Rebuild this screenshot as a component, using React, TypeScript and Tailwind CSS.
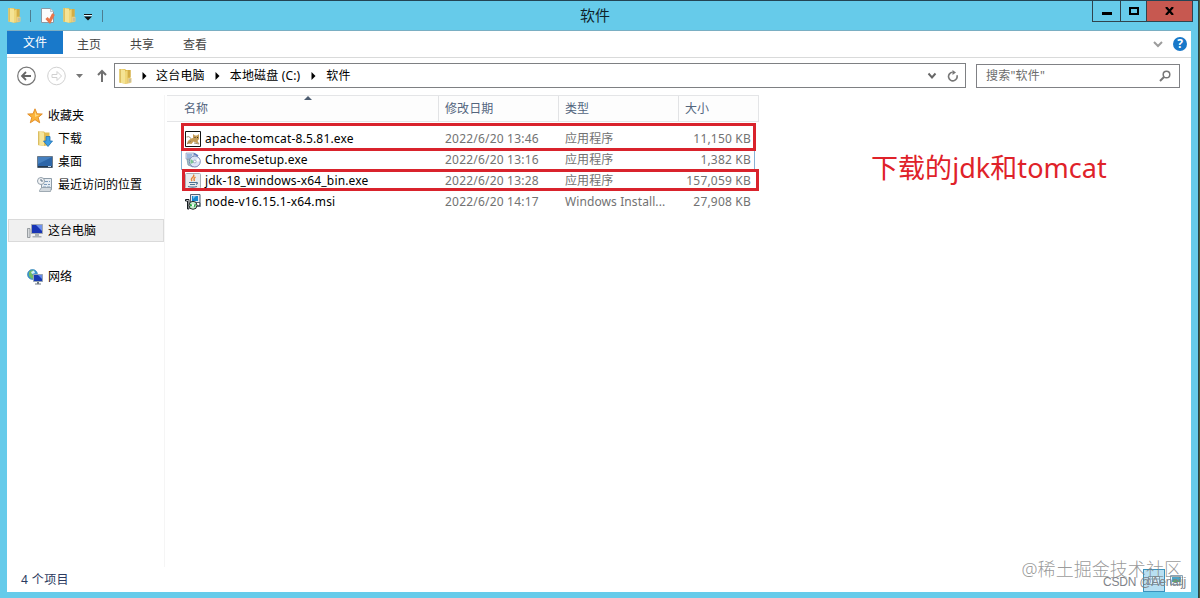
import type { ReactNode } from "react";

interface FileEntry {
  name: string;
  date: string;
  type: string;
  size: string;
  icon: ReactNode;
}

const FolderIcon = () => (
  <svg width="16" height="16" viewBox="0 0 16 16" className="shrink-0">
    <path d="M1.500 1h5.500l1 1h4.500v13l-5 .8-6-1.300z" fill="#dcb94e" />
    <path d="M1.500 1l5.500.8v14L1.500 14.500z" fill="#f4e394" />
    <path d="M1.500 1H3v13.800l-1.500-.3z" fill="#dcbf62" />
    <path d="M7 3.500l2.500-1V15L7 15.800z" fill="#efd678" />
    <path d="M10 2h2.500v7H10z" fill="#d3ad45" />
    <path d="M9.500 10h4v4.500l-4 .8z" fill="#e6cc85" />
    <path d="M11 11h2v3h-2z" fill="#c8bf9a" />
  </svg>
);

const PropertiesIcon = () => (
  <svg width="16" height="17" viewBox="0 0 16 17" className="shrink-0">
    <path d="M1.500 1.500h9l3 3v11h-12z" fill="#fcfcfc" stroke="#8b98a3" />
    <path d="M10.500 1.500v3h3" fill="#e4e8ec" stroke="#a4adb5" strokeWidth=".7" />
    <path d="M6.500 11l3.200 3.500 3.800-7.500" fill="none" stroke="#e8764a" strokeWidth="3" />
  </svg>
);

const StarIcon = () => (
  <svg width="16" height="16" viewBox="0 0 16 16" className="shrink-0">
    <path d="M8 .8l2 5 5.300.200-4.100 3.400 1.500 5.400L8 11.700l-4.700 3.100 1.500-5.400L.7 6l5.300-.2z" fill="#fbb33a" stroke="#e08a24" strokeWidth=".9" />
    <path d="M8 3l1.200 3.800 3.300.200L8 9z" fill="#ffd982" />
  </svg>
);

const DownloadsIcon = () => (
  <svg width="16" height="16" viewBox="0 0 16 16" className="shrink-0">
    <path d="M1 .5h6l1 1h4.500V14L7 15l-6-1z" fill="#e0bd55" />
    <path d="M1 .5l6 1V15l-6-1z" fill="#f6e69c" />
    <path d="M1 .5h1.300v13.700L1 14z" fill="#dbbd62" />
    <path d="M9 5.500h4V10h2.500L11 15.500 6.500 10H9z" fill="#3d9ee2" stroke="#2272b5" strokeWidth=".8" />
  </svg>
);

const DesktopIcon = () => (
  <svg width="16" height="16" viewBox="0 0 16 16" className="shrink-0">
    <path d="M.5 2.500h15v11H.5z" fill="#2d66a8" stroke="#6a7a8a" />
    <path d="M1 3h14L1 10z" fill="#4580c0" />
    <path d="M1 12h14v1.500H1z" fill="#25384c" />
    <path d="M11 12.500h3" stroke="#bcd4e8" />
  </svg>
);

const RecentIcon = () => (
  <svg width="16" height="16" viewBox="0 0 16 16" className="shrink-0">
    <path d="M4.500 1.500h10v11h-10z" fill="#e7edf2" stroke="#8e9ca8" />
    <path d="M8 4.500h5M7 7.500h6M6 10h7" stroke="#7f9cbb" strokeDasharray="3 1" />
    <path d="M2.500 13.500l2-3h10l-1 4h-11z" fill="#d3d9de" stroke="#8c99a3" strokeWidth=".8" />
    <circle cx="4" cy="4" r="3.500" fill="#f2f4f6" stroke="#93a0ab" />
    <path d="M4 2v2h2" fill="none" stroke="#5f7386" />
  </svg>
);

const ComputerIcon = () => (
  <svg width="16" height="16" viewBox="0 0 16 16" className="shrink-0">
    <path d="M.5 5.500h2.500v9H.5z" fill="#d6d9dc" stroke="#858b91" strokeWidth=".8" />
    <path d="M4.500 1.500h11v9h-11z" fill="#1935b5" stroke="#a2a9b0" />
    <path d="M9 2h6v6z" fill="#6f91ed" />
    <path d="M8 11h4v2h2.500v1.500H5.500V13H8z" fill="#aab1b8" />
  </svg>
);

const NetworkIcon = () => (
  <svg width="16" height="16" viewBox="0 0 16 16" className="shrink-0">
    <circle cx="5.500" cy="5.500" r="5" fill="#3b97cf" stroke="#287db0" strokeWidth=".6" />
    <path d="M2 3q3-3 5-1L5 5l2 3-2 2-3-3z" fill="#73bd62" />
    <path d="M4 3l3-1.500L8 4 5 5z" fill="#d4eefa" />
    <path d="M6.500 5.500h9v7h-9z" fill="#173bb3" stroke="#98a5b4" />
    <path d="M11 6h4v4z" fill="#668be8" />
    <path d="M10 13h2v1.500h2v1H8v-1h2z" fill="#6e7983" />
  </svg>
);

const TomcatIcon = () => (
  <svg width="16" height="16" viewBox="0 0 16 16" className="shrink-0">
    <path d="M.5.500h15v15H.5z" fill="#fff" stroke="#111" />
    <path d="M2 12.500q1-3.500 4-5l2-.5V3l2 1.500h2L14 3v5l-1.500 2 2 3-4-1.500-2-1-2 2.500z" fill="#c59d58" />
    <path d="M1.500 6q2.500-1.500 4.500 1.500M2 13l4-3M9 12l5 1" fill="none" stroke="#857653" strokeWidth=".8" />
    <path d="M9.500 6.500h1M12 6.500h1" stroke="#44351e" />
  </svg>
);

const SetupIcon = () => (
  <svg width="16" height="16" viewBox="0 0 16 16" className="shrink-0">
    <path d="M1 1h8v6H1z" fill="#d8e1ef" stroke="#8d98bd" strokeWidth=".7" />
    <path d="M2 3h5M2 5h4" stroke="#5f8fcc" />
    <path d="M2 7h6v8l-5-2z" fill="#9fc7c4" stroke="#7288a5" strokeWidth=".7" />
    <circle cx="9.800" cy="9.500" r="5.500" fill="#dce5f6" stroke="#6f7dae" strokeWidth=".9" />
    <path d="M10 10L5.500 7v5z" fill="#7ac58f" />
    <path d="M10 10l3-4 2 3z" fill="#fff" />
    <circle cx="9.800" cy="9.500" r="1.400" fill="#fff" stroke="#7885b4" strokeWidth=".6" />
    <path d="M9 1.500l4 2.500" stroke="#5d79bd" strokeWidth="1.600" />
  </svg>
);

const JavaIcon = () => (
  <svg width="16" height="16" viewBox="0 0 16 16" className="shrink-0">
    <rect x=".5" y=".5" width="15" height="15" rx="1" fill="#e9ecee" stroke="#a9b0b6" />
    <path d="M8.500 1.500q1 1.500-1 3t-.5 3.500M10.500 4Q8 5.500 9.500 8" fill="none" stroke="#e58335" strokeWidth="1.300" />
    <path d="M4 9.500h7M5 11.500h5M3 13.500q5 1.200 9 0M11 9.300q3 .5 0 2.200" fill="none" stroke="#4c7292" strokeWidth="1.100" />
  </svg>
);

const InstallerIcon = () => (
  <svg width="16" height="16" viewBox="0 0 16 16" className="shrink-0">
    <path d="M5.500.500h9.500v8H5.500z" fill="#e7edf4" stroke="#566171" />
    <path d="M7 2h6v5H7z" fill="#1688cf" />
    <path d="M8 2h3L8 5z" fill="#7ac6ef" />
    <path d="M15 8.500v3.500h-3.500" fill="none" stroke="#34434c" strokeWidth="1.300" />
    <path d="M.5 5.500h3.500v9.500H2.500V7H.5z" fill="#fff" stroke="#151b20" />
    <circle cx="8" cy="11.300" r="4" fill="#c5eccd" stroke="#252b2b" />
    <path d="M8 11.500l-3-2v3zM8 11.500l3-2-1 4z" fill="#2eaa4c" />
    <circle cx="8" cy="11.300" r="1.100" fill="#fff" />
  </svg>
);

const files: FileEntry[] = [
  { name: "apache-tomcat-8.5.81.exe", date: "2022/6/20 13:46", type: "应用程序", size: "11,150 KB", icon: <TomcatIcon /> },
  { name: "ChromeSetup.exe", date: "2022/6/20 13:16", type: "应用程序", size: "1,382 KB", icon: <SetupIcon /> },
  { name: "jdk-18_windows-x64_bin.exe", date: "2022/6/20 13:28", type: "应用程序", size: "157,059 KB", icon: <JavaIcon /> },
  { name: "node-v16.15.1-x64.msi", date: "2022/6/20 14:17", type: "Windows Install...", size: "27,908 KB", icon: <InstallerIcon /> },
];

const Crumb = () => (
  <svg width="5" height="8" viewBox="0 0 5 8" className="shrink-0">
    <path d="M.5 0l4 4-4 4z" fill="#000" />
  </svg>
);

const TitleBar = () => (
  <header className="flex h-[30px] shrink-0 border-t border-[#234454]">
    <div className="flex w-[552px] pl-[7px] pt-1.5">
      <FolderIcon />
      <div className="ml-[7px] mt-[3px] h-3 w-px bg-[#4d7d91]" />
      <div className="ml-[9px]"><PropertiesIcon /></div>
      <div className="ml-[6px]"><FolderIcon /></div>
      <svg width="8" height="7" viewBox="0 0 8 7" className="ml-[6px] mt-[7px]">
        <path d="M0 0h8v1H0zM0 2.500h8L4 6.500z" fill="#111" />
        <path d="M0 1h8v1H0z" fill="#e8f6fb" />
      </svg>
      <div className="ml-[10px] mt-[3px] h-3 w-px bg-[#4d7d91]" />
    </div>
    <div className="w-[86px] pt-[4px] text-center text-[15px] leading-5 text-[#10232b]">软件</div>
    <div className="ml-auto mr-[5px] flex h-[21px] border-x border-b border-[#30434d]">
      <button className="flex w-[27px] items-center justify-center">
        <span className="mt-[5px] h-[3px] w-2.5 bg-black" />
      </button>
      <button className="flex w-[26px] items-center justify-center border-l border-[#30434d]">
        <span className="h-2 w-2.5 border-2 border-black" />
      </button>
      <button className="flex w-[46px] items-center justify-center border-l border-[#30434d] bg-[#c75850]">
        <svg width="9" height="8" viewBox="0 0 9 8"><path d="M1 0l7 8M8 0L1 8" stroke="#000" strokeWidth="2.200" /></svg>
      </button>
    </div>
  </header>
);

const RibbonTabs = () => (
  <nav className="flex h-[28px] shrink-0 border-b border-t border-b-[#d9dada] border-t-[#7aafc3] text-[12px] leading-[28px] text-[#454545]">
    <div className="h-[23px] w-[56px] bg-[#1979ca] text-center leading-[23px] text-white">文件</div>
    <span className="ml-[14px]">主页</span>
    <span className="ml-[29px]">共享</span>
    <span className="ml-[29px]">查看</span>
    <svg width="10" height="8" viewBox="0 0 10 8" className="ml-auto mr-2.5 mt-2.5">
      <path d="M1 1l4 4 4-4" fill="none" stroke="#9c9c9c" strokeWidth="2" />
    </svg>
    <span className="mr-1 mt-[6px] h-3.5 w-3.5 rounded-full bg-[#1878c9] text-center text-[12px] font-bold leading-3.5 text-white">?</span>
  </nav>
);

const AddressBar = () => (
  <div className="flex h-[37px] shrink-0 items-center pb-[2px] pl-2.5 pr-[11px]">
    <svg width="90" height="20" viewBox="0 0 90 20" className="shrink-0" fill="none">
      <circle cx="9.500" cy="10" r="8.800" stroke="#777" strokeWidth="1.200" />
      <path d="M14 10H5.500M9 6l-4 4 4 4" stroke="#666" strokeWidth="1.800" />
      <circle cx="39.500" cy="10" r="8.800" stroke="#d1d1d1" />
      <path d="M35 8.500h5v-3l4.500 4.500-4.500 4.500v-3h-5z" stroke="#d1d1d1" />
      <path d="M59 8h7l-3.500 4z" fill="#777" />
      <path d="M85 16V5M81 9l4-4 4 4" stroke="#707070" strokeWidth="2" />
    </svg>
    <div className="ml-[7px] flex h-[25px] w-[852px] shrink-0 items-center border border-[#7e8083] pl-[3px] text-[12px] text-black">
      <FolderIcon />
      <span className="ml-2"><Crumb /></span>
      <span className="ml-[9px] tracking-[0.2px]">这台电脑</span>
      <span className="ml-[10px]"><Crumb /></span>
      <span className="ml-[10px] whitespace-nowrap tracking-[0.15px]">本地磁盘 (C:)</span>
      <span className="ml-[11px]"><Crumb /></span>
      <span className="ml-[10px] tracking-[0.2px]">软件</span>
      <svg width="10" height="8" viewBox="0 0 10 8" className="ml-auto mr-[10px]">
        <path d="M1.500 1.500L5 5.500l3.500-4" fill="none" stroke="#666" strokeWidth="1.900" />
      </svg>
      <svg width="12" height="12" viewBox="0 0 12 12" className="mr-[6px]">
        <path d="M9.900 5.200A4.300 4.300 0 1 1 5.600 2.300" fill="none" stroke="#777" strokeWidth="1.600" />
        <path d="M5.500 0v5L9 2.500z" fill="#777" />
      </svg>
    </div>
    <div className="ml-2.5 mt-px flex h-6 w-[204px] shrink-0 items-center border border-[#808185] pl-[9px] text-[12px] text-[#6d6d6d]">
      <span className="tracking-[0.2px]">搜索"软件"</span>
      <svg width="12" height="12" viewBox="0 0 12 12" className="ml-auto mr-[8px]">
        <circle cx="7.500" cy="4.500" r="3.300" fill="none" stroke="#777" strokeWidth="1.500" />
        <path d="M5 7L1 11" stroke="#777" strokeWidth="2" />
      </svg>
    </div>
  </div>
);

const Sidebar = () => (
  <aside className="w-[158px] shrink-0 border-r border-[#f5f5f5] pt-[9px] text-[12px] text-black">
    <div className="flex h-[23px] items-center gap-[5px] pl-5"><StarIcon />收藏夹</div>
    <div className="flex h-[23px] items-center gap-[5px] pl-[30px]"><DownloadsIcon />下载</div>
    <div className="flex h-[23px] items-center gap-[5px] pl-[30px]"><DesktopIcon />桌面</div>
    <div className="flex h-[23px] items-center gap-[5px] pl-[30px]"><RecentIcon />最近访问的位置</div>
    <div className="ml-px mt-[23px] flex h-[23px] w-[156px] items-center gap-[5px] border border-[#dadada] bg-[#f0f0f0] pl-[18px]"><ComputerIcon />这台电脑</div>
    <div className="mt-[23px] flex h-[23px] items-center gap-[5px] pl-5"><NetworkIcon />网络</div>
  </aside>
);

const FileList = () => (
  <main className="relative min-w-0 grow text-[12px]">
    <div className="ml-[2px] flex h-[27px] w-[592px] border border-l-0 border-[#e4e5e7] bg-[#fdfdfd] leading-[26px] text-[#53657d]">
      <span className="w-[272px] border-r border-[#e2e3e5] pl-[17px]">名称</span>
      <span className="w-[120px] border-r border-[#e2e3e5] pl-1.5 tracking-[0.1px]">修改日期</span>
      <span className="w-[120px] border-r border-[#e2e3e5] pl-1.5">类型</span>
      <span className="pl-1.5">大小</span>
    </div>
    <svg width="8" height="4" viewBox="0 0 8 4" className="absolute left-[139px] top-[1px]"><path d="M4 0l4 4H0z" fill="#4d5c70" /></svg>
    <div className="pl-[20px] pt-[6px]">
      {files.map((file) => (
        <div key={file.name} className="flex h-[21px] items-center whitespace-nowrap text-[#727272]">
          {file.icon}
          <span className="ml-1 w-[240px] tracking-[0.17px] text-black">{file.name}</span>
          <span className="w-[120px] tracking-[0.2px]">{file.date}</span>
          <span className="w-[104px] tracking-[0.1px]">{file.type}</span>
          <span className="w-[82px] text-right tracking-[0.2px]">{file.size}</span>
        </div>
      ))}
    </div>
    <div className="absolute left-[16px] top-[55px] h-[20px] w-[574px] border-x border-[#89b2d5]" />
    <div className="absolute left-[16px] top-[28px] h-[28px] w-[575px] border-3 border-[#d9232c]" />
    <div className="absolute left-[17px] top-[74px] h-[22px] w-[577px] border-3 border-[#d9232c]" />
    <div className="absolute left-[706px] top-[54px] whitespace-nowrap text-[27px] leading-[38px] tracking-[0.05px] text-[#df2229]">下载的jdk和tomcat</div>
  </main>
);

const StatusBar = () => (
  <footer className="relative flex h-[25px] shrink-0 pl-[14px] text-[12px] leading-[26px] tracking-[0.4px] text-[#2b3a60]">
    4 个项目
    <div className="absolute right-[26px] top-[2px] h-[23px] w-[22px] border border-[#3b92bc] bg-[#b8dff2]">
      <svg width="20" height="21" viewBox="0 0 20 21"><path d="M4.500 6.500h11v8h-11zM4.500 9h11M8.500 6.500v8" fill="#dceff8" stroke="#7f9fb2" /></svg>
    </div>
    <svg width="13" height="10" viewBox="0 0 13 10" className="absolute right-[8px] top-[8px]">
      <path d="M.5.500h12v9H.5z" fill="#eff9fd" stroke="#8aa3b3" />
      <path d="M2 2h9v5H2z" fill="#4ba3c6" />
      <path d="M2 7l4-3 5 3z" fill="#61a56b" />
    </svg>
    <div className="absolute right-[9px] top-[-10px] whitespace-nowrap text-[18px] font-light leading-6 tracking-[0.05px] text-[#808080]/80">@稀土掘金技术社区</div>
    <div className="absolute right-[5px] top-[7px] whitespace-nowrap font-['Liberation_Sans',sans-serif] text-[12px] leading-4 tracking-[-0.2px] text-[#7f8389]">CSDN @Aenaijj</div>
  </footer>
);

const App = () => {
  return (
    <div className="flex h-[598px] w-[1200px] overflow-hidden bg-[#66cbea] font-['Noto_Sans','Noto_Sans_CJK_SC',sans-serif]">
      <div className="flex w-[1198px] shrink-0 flex-col">
        <TitleBar />
        <section className="ml-[7px] flex h-[562px] w-[1184px] flex-col bg-white">
          <RibbonTabs />
          <AddressBar />
          <div className="flex min-h-0 grow">
            <Sidebar />
            <FileList />
          </div>
          <StatusBar />
        </section>
      </div>
      <div className="w-0.5 border-r border-[#4b5e3c] bg-[#28434b]" />
    </div>
  );
};

export default App;
